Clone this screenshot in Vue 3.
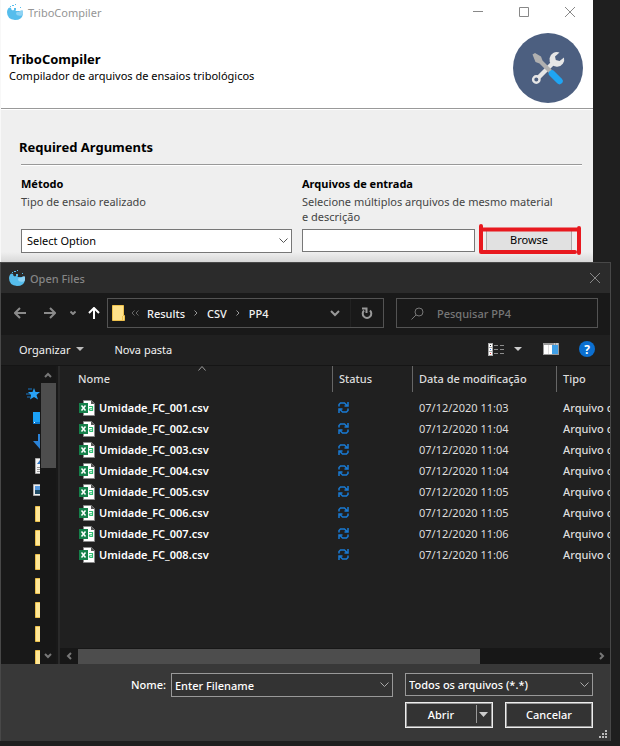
<script setup>
import { ref } from 'vue'

const files = [
  { name: 'Umidade_FC_001.csv', date: '07/12/2020 11:03' },
  { name: 'Umidade_FC_002.csv', date: '07/12/2020 11:04' },
  { name: 'Umidade_FC_003.csv', date: '07/12/2020 11:04' },
  { name: 'Umidade_FC_004.csv', date: '07/12/2020 11:04' },
  { name: 'Umidade_FC_005.csv', date: '07/12/2020 11:05' },
  { name: 'Umidade_FC_006.csv', date: '07/12/2020 11:05' },
  { name: 'Umidade_FC_007.csv', date: '07/12/2020 11:06' },
  { name: 'Umidade_FC_008.csv', date: '07/12/2020 11:06' }
]
const crumbs = ['Results', 'CSV', 'PP4']
const places = ['star', 'desktop', 'download', 'document', 'picture', 'folder', 'folder', 'folder', 'folder', 'folder', 'folder', 'folder']
const inputPath = ref('')
const search = ref('')
</script>

<template>
  <main class="desktop">
    <section class="window">
      <header class="titlebar">
        <svg class="logo" viewBox="0 0 16 16">
          <path d="M1.500 4Q3 3 4 4q0 2 2 2.500Q8 5 9 7h7v3q-1 6-8 6-8-.5-8-8 0-2 1.500-4z" fill="#56bdec" />
          <path d="M10 7.500q1 1 2.500 0 1.500-2 3.500-1 .5 4-1 5-5 1-6-1.500 0-1.500 1-2.500z" fill="#8fd3f4" />
          <path d="M5 1h2v1H5zM8 0h1v1H8zM7 4h2v2H7zM13 3h1v1h-1zM3 2h1v1H3z" fill="#56bdec" />
        </svg>
        <span class="caption">TriboCompiler</span>
        <button class="sys" aria-label="Minimize"><svg viewBox="0 0 10 10"><path d="M0 4.500h10" /></svg></button>
        <button class="sys" aria-label="Maximize"><svg viewBox="0 0 10 10"><path d="M.5.5h9v9h-9z" /></svg></button>
        <button class="sys" aria-label="Close"><svg viewBox="0 0 10 10"><path d="M0 0l10 10M10 0 0 10" /></svg></button>
      </header>

      <div class="banner">
        <div class="intro">
          <h1>TriboCompiler</h1>
          <p>Compilador de arquivos de ensaios tribológicos</p>
        </div>
        <svg class="tools" viewBox="0 0 70 70">
          <circle cx="35" cy="35" r="35" fill="#4c5f80" />
          <path d="M25 45 42 28" stroke="#e6e6e6" stroke-width="4.500" />
          <circle cx="23.300" cy="46.500" r="3.200" fill="none" stroke="#e6e6e6" stroke-width="2.400" />
          <path d="M46.500 19.500a7.400 7.400 0 1 0 4.500 5l-4.500 3.500-3.700-1-.8-3.500z" fill="#e6e6e6" />
          <path d="M19.500 21.500 22 20l6 3.500 1.500 4L39 37l-3 3-9.500-9.500-4-1.500z" fill="#b0b0b0" />
          <path d="M39 40.500 46.500 48" stroke="#1fa5f3" stroke-width="6.500" stroke-linecap="round" />
        </svg>
      </div>

      <form class="form" @submit.prevent>
        <h2>Required Arguments</h2>
        <div class="fields">
          <div class="field">
            <label for="method">Método</label>
            <p>Tipo de ensaio realizado</p>
            <div class="combo light">
              <select id="method"><option>Select Option</option></select>
              <svg viewBox="0 0 9 6"><path d="M.5.5l4 4 4-4" /></svg>
            </div>
          </div>
          <div class="field">
            <label for="entry">Arquivos de entrada</label>
            <p>Selecione múltiplos arquivos de mesmo material e descrição</p>
            <div class="picker">
              <input id="entry" v-model="inputPath" type="text">
              <div class="marked">
                <button type="button" class="browse">Browse</button>
                <svg class="mark" viewBox="0 0 106 34">
                  <path d="M4 3v26M4 6.500h98M102 5v25M4.500 29H98" />
                </svg>
              </div>
            </div>
          </div>
        </div>
      </form>
    </section>

    <section class="dialog">
      <header class="dialog-title">
        <svg class="logo" viewBox="0 0 16 16">
          <path d="M1.500 4Q3 3 4 4q0 2 2 2.500Q8 5 9 7h7v3q-1 6-8 6-8-.5-8-8 0-2 1.500-4z" fill="#56bdec" />
          <path d="M10 7.500q1 1 2.500 0 1.500-2 3.500-1 .5 4-1 5-5 1-6-1.500 0-1.500 1-2.500z" fill="#8fd3f4" />
          <path d="M5 1h2v1H5zM8 0h1v1H8zM7 4h2v2H7zM13 3h1v1h-1zM3 2h1v1H3z" fill="#56bdec" />
        </svg>
        <span class="caption">Open Files</span>
        <button class="sys small" aria-label="Close"><svg viewBox="0 0 10 10"><path d="M0 0l10 10M10 0 0 10" /></svg></button>
      </header>

      <nav class="nav">
        <div class="arrows">
          <button aria-label="Back"><svg width="12" height="12" viewBox="0 0 12 12"><path d="M12 6H1M6 1 1 6l5 5" /></svg></button>
          <button aria-label="Forward"><svg width="12" height="12" viewBox="0 0 12 12"><path d="M0 6h11M6 1l5 5-5 5" /></svg></button>
          <button aria-label="Recent"><svg width="6" height="4" viewBox="0 0 6 4"><path d="M.5.500 3 3 5.500.5" /></svg></button>
          <button aria-label="Up" class="up"><svg width="12" height="12" viewBox="0 0 12 12"><path d="M6 12V1M1 6l5-5 5 5" /></svg></button>
        </div>
        <div class="address">
          <svg width="13" height="16" viewBox="0 0 13 16"><path d="M.5.5h11v10h1v5H.5z" fill="#ffe28a" stroke="#eec14c" /><path d="M10.500 11v4" stroke="#eec14c" /></svg>
          <svg class="more" width="8" height="6" viewBox="0 0 8 6"><path d="M3.500.5 1 3l2.500 2.500M7.500.5 5 3l2.500 2.500" /></svg>
          <template v-for="(c, i) in crumbs" :key="c">
            <a href="#">{{ c }}</a>
            <svg v-if="i < crumbs.length - 1" class="sep" width="4" height="6" viewBox="0 0 4 6"><path d="M.5.500 3 3 .5 5.500" /></svg>
          </template>
          <button class="drop" aria-label="History"><svg width="10" height="7" viewBox="0 0 10 7"><path d="M1 1l4 4 4-4" /></svg></button>
          <button class="refresh" aria-label="Refresh"><svg width="12" height="12" viewBox="0 0 12 12"><path d="M9 3.500A4.300 4.300 0 1 1 3 3.500M1 1.500H5.500V6" /></svg></button>
        </div>
        <div class="search">
          <svg width="13" height="13" viewBox="0 0 13 13"><circle cx="8" cy="5" r="4" /><path d="M5 8 .5 12.500" /></svg>
          <input v-model="search" type="text" placeholder="Pesquisar PP4" aria-label="Pesquisar PP4">
        </div>
      </nav>

      <div class="toolbar">
        <button>Organizar <svg width="8" height="4" viewBox="0 0 8 4"><path d="M0 0h8L4 4z" fill="#bbb" /></svg></button>
        <button class="new">Nova pasta</button>
        <button class="view" aria-label="View">
          <svg width="16" height="13" viewBox="0 0 16 13">
            <path d="M0 0h5v13H0z" fill="#aaa" /><path d="M1 1h3v3H1zM1 5h3v3H1zM1 9h3v3H1z" fill="#fff" />
            <path d="M2 2h1v1H2z" fill="#222" /><path d="M2 6h1v1H2z" fill="#2f7de0" /><path d="M2 10h1v1H2z" fill="#d33" />
            <path d="M6 2.500h4M12 2.500h4M6 6.500h4M12 6.500h4M6 10.500h4M12 10.500h4" stroke="#8d8d8d" />
          </svg>
          <svg width="8" height="4" viewBox="0 0 8 4"><path d="M0 0h8L4 4z" fill="#ccc" /></svg>
        </button>
        <button class="preview" aria-label="Preview pane">
          <svg width="16" height="12" viewBox="0 0 16 12"><path d="M0 0h16v12H0z" fill="#999" /><path d="M1 2h4v9H1zM5 2h4v9H5z" fill="#fff" /><path d="M9 2h6v9H9z" fill="#3f9fe6" /><path d="M5 2h.5v9H5z" fill="#bbb" /><path d="M11 1h1M13 1h2" stroke="#eee" /></svg>
        </button>
        <button class="help" aria-label="Help">?</button>
      </div>

      <div class="panes">
        <aside class="side">
          <ul>
            <li v-for="(p, i) in places" :key="i">
              <svg width="14" height="16" viewBox="0 0 14 16">
                <g v-if="p === 'star'"><path d="M8 2l1.500 4H14l-3.500 3 1.500 4.500-4-2.500-4 2.500L5 9 2 6h4.500z" fill="#28a2f5" /><path d="M2 3h4M0 8h4M1 11h3" stroke="#1976c5" /></g>
                <g v-else-if="p === 'desktop'"><path d="M7 2h7v12H7z" fill="#1ba1f7" /><path d="M7 12h7v2H7z" fill="#0c79cf" /><path d="M8 12h1v1H8z" fill="#fff" /></g>
                <path v-else-if="p === 'download'" d="M12 0v7H7l7 8V0z" fill="#2b83d8" />
                <g v-else-if="p === 'document'"><path d="M9.500.5H15v15H9.500z" fill="#f4f4f4" stroke="#aaa" /><path d="M11 9.500h3M11 11.500h3M11 13.500h3" stroke="#999" /><path d="M11 6h3V2z" fill="#2f77c5" /></g>
                <g v-else-if="p === 'picture'"><path d="M7.500 2.500H15v11H7.500z" fill="#eee" stroke="#aaa" /><path d="M9 4h5v4H9z" fill="#589be0" /><path d="M9 8h5v4H9z" fill="#204c66" /></g>
                <path v-else d="M9.500.5H15v15H9.500z" fill="#ffe796" stroke="#edc04b" />
              </svg>
            </li>
          </ul>
          <div class="vbar">
            <svg width="8" height="6" viewBox="0 0 8 6"><path d="M1 5l3-3 3 3" /></svg>
            <i></i>
            <svg width="8" height="6" viewBox="0 0 8 6"><path d="M1 1l3 3 3-3" /></svg>
          </div>
        </aside>

        <div class="list">
          <table>
            <thead>
              <tr>
                <th class="c-name">Nome<svg class="sort" width="8" height="5" viewBox="0 0 8 5"><path d="M.5 4.500l3.500-4 3.500 4" /></svg></th>
                <th class="c-status">Status</th>
                <th class="c-date">Data de modificação</th>
                <th>Tipo</th>
              </tr>
            </thead>
            <tbody>
              <tr v-for="f in files" :key="f.name">
                <td class="name">
                  <span>
                    <svg width="16" height="16" viewBox="0 0 16 16">
                      <path d="M4.500.5h8l3 3v12h-11z" fill="#fff" stroke="#8a8a8a" />
                      <path d="M12 0v4h4z" fill="#555" />
                      <path d="M0 3h9v10H0z" fill="#15804a" />
                      <path d="M2.500 5.500l4 5M6.500 5.500l-4 5" stroke="#fff" stroke-width="1.500" />
                      <path d="M10 6.500h3.500v4H11q-1-.5-.5-1.500.5-.5 3-.500" fill="none" stroke="#2ebd72" stroke-width="1.200" />
                    </svg>
                    {{ f.name }}
                  </span>
                </td>
                <td class="sync">
                  <svg width="11" height="11" viewBox="0 0 11 11"><path d="M1 4.500V2.500L2.500 1h4l2.500 2.500M10 0v4H6.500M10 6.500v2L8.500 10h-4L2 7.500M1 11V7h3.500" /></svg>
                </td>
                <td>{{ f.date }}</td>
                <td class="type">Arquivo de Valores</td>
              </tr>
            </tbody>
          </table>
          <div class="hbar">
            <svg width="6" height="8" viewBox="0 0 6 8"><path d="M5 1 2 4l3 3" /></svg>
            <div class="track"><i></i></div>
            <svg width="6" height="8" viewBox="0 0 6 8"><path d="M1 1l3 3-3 3" /></svg>
          </div>
        </div>
      </div>

      <footer class="footer">
        <label for="filename">Nome:</label>
        <div class="combo dark">
          <select id="filename"><option>Enter Filename</option></select>
          <svg viewBox="0 0 9 6"><path d="M.5.5l4 4 4-4" /></svg>
        </div>
        <div class="actions">
          <div class="combo dark">
            <select aria-label="Tipo de arquivo"><option>Todos os arquivos (*.*)</option></select>
            <svg viewBox="0 0 9 6"><path d="M.5.5l4 4 4-4" /></svg>
          </div>
          <div class="buttons">
            <button class="open"><span>Abrir</span><svg width="16" height="18" viewBox="0 0 16 18"><path d="M.5 0v18" stroke="#999" /><path d="M3 7h9L7.500 12z" fill="#ccc" /></svg></button>
            <button class="cancel">Cancelar</button>
          </div>
        </div>
        <svg class="grip" width="8" height="8" viewBox="0 0 8 8"><path d="M6 0h2v2H6zM3 3h2v2H3zM6 3h2v2H6zM0 6h2v2H0zM3 6h2v2H3zM6 6h2v2H6z" fill="#bbb" /></svg>
      </footer>
    </section>
  </main>
</template>

<style>
body { background: #1f1f1f; }
</style>

<style scoped>
* { box-sizing: border-box; }
.desktop { font: 500 11px/15px "Noto Sans", "Open Sans", sans-serif; padding-bottom: 5px; }
button, input, select { font: inherit; color: inherit; margin: 0; padding: 0; border: 0; background: none; border-radius: 0; outline: none; }
svg { display: block; flex: none; fill: none; }
h1, h2, p, ul { margin: 0; padding: 0; }

.window { margin-right: 27px; background: #fff; border-left: 1px solid #f8f8f8; color: #000; font-weight: 400; }
.titlebar { display: flex; align-items: center; height: 24px; padding-left: 6px; color: #959595; }
.logo { width: 16px; height: 16px; margin-right: 5px; }
.caption { flex: 1; }
.sys { display: grid; place-items: center; width: 46px; height: 24px; }
.sys svg { width: 10px; height: 10px; stroke: #888; overflow: visible; }
.sys.small { width: 30px; }
.banner { display: flex; justify-content: space-between; height: 85px; padding: 9px 10px 0 8px; border-bottom: 1px solid #999; }
.intro { padding-top: 18px; }
h1 { font-size: 13px; line-height: 17px; font-weight: 700; }
.tools { width: 70px; height: 70px; }
.form { margin-top: 1px; padding: 28px 11px 9px 20px; background: linear-gradient(#efefef calc(100% - 10px), #d8d8d8); }
h2 { margin-left: -2px; padding-bottom: 8px; font-size: 13px; line-height: 18px; font-weight: 700; }
.fields { display: grid; grid-template-columns: 271fr 280fr; gap: 10px; border-top: 1px solid #999; box-shadow: inset 0 1px #fff; padding-top: 11px; }
.field { display: flex; flex-direction: column; }
.field label { font-weight: 700; line-height: 16px; }
.field p { min-height: 30px; margin: 2px 0 5px; padding-right: 22px; color: #444; }
.combo { display: grid; align-items: center; }
.combo select { grid-area: 1 / 1; width: 100%; height: 24px; appearance: none; border: 1px solid #777; padding: 0 20px 2px 5px; }
.combo svg { grid-area: 1 / 1; justify-self: end; width: 9px; height: 6px; margin-right: 4px; stroke: #555; pointer-events: none; }
.light select { background: #fff; }
.picker { display: flex; gap: 11px; }
.picker input { flex: 1; min-width: 0; height: 23px; border: 1px solid #777; background: #fff; }
.marked { position: relative; width: 86px; margin-right: 10px; }
.browse { width: 100%; height: 22px; padding-bottom: 2px; background: #e1e1e1; border: 1px solid #adadad; }
.mark { position: absolute; left: -9px; top: -6px; width: 106px; height: 34px; stroke: #e8191f; stroke-width: 4; stroke-linecap: round; stroke-linejoin: round; pointer-events: none; }

.dialog { margin-right: 9px; background: #202020; border: 1px solid #484848; border-bottom: 0; color: #f2f2f2; }
.dialog-title { display: flex; align-items: center; height: 30px; padding-left: 8px; background: #2b2b2b; color: #858585; }
.nav { display: grid; grid-template-columns: 93px 277fr 202fr; align-items: center; height: 42px; padding: 0 12px 2px 13px; background: #191919; }
.arrows { display: flex; align-items: center; gap: 14px; stroke: #8a8a8a; stroke-width: 2; }
.arrows button { display: grid; }
.arrows button:nth-child(2) { margin-left: 4px; }
.arrows .up { stroke: #fff; margin-left: -2px; }
.address { display: flex; align-items: center; height: 30px; border: 1px solid #535353; padding-left: 4px; }
.address a { color: inherit; text-decoration: none; }
.more { stroke: #666; margin: 0 8px 0 6px; }
.sep { stroke: #999; margin: 0 9px; }
.drop { margin-left: auto; padding: 0 10px; stroke: #999; stroke-width: 2; }
.refresh { display: grid; place-items: center; width: 33px; height: 28px; border-left: 1px solid #222; stroke: #999; stroke-width: 2; }
.search { display: flex; align-items: center; gap: 13px; height: 30px; margin-left: 12px; border: 1px solid #535353; padding-left: 14px; }
.search svg { stroke: #777; }
.search input { flex: 1; min-width: 0; }
.search input::placeholder { color: #777; opacity: 1; }
.nav { grid-template-columns: 93px 277fr 214fr; }
.toolbar { display: flex; align-items: center; height: 30px; padding: 0 15px 2px 18px; font-weight: 400; }
.toolbar button { display: flex; align-items: center; gap: 6px; }
.toolbar .new { margin-left: 30px; }
.toolbar .view { margin-left: auto; gap: 10px; }
.toolbar .preview { margin: 0 20px 0 21px; }
.toolbar .help { justify-content: center; width: 16px; height: 16px; border-radius: 50%; background: #0b6fd0; color: #fff; font-weight: 700; font-size: 12px; }

.panes { display: flex; border-top: 1px solid #151515; height: 299px; }
.side { display: flex; width: 59px; flex: none; background: #191919; border-right: 2px solid #2a2a2a; }
.side ul { width: 39px; overflow: hidden; list-style: none; padding-top: 16px; }
.side li { height: 24px; padding: 4px 0 4px 25px; }
.vbar { display: flex; flex-direction: column; align-items: center; justify-content: space-between; width: 16px; padding: 6px 0 5px; background: #171717; stroke: #777; stroke-width: 2; }
.vbar i { width: 15px; height: 85px; margin: 5px 0 auto; background: #4d4d4d; }
.list { display: flex; flex-direction: column; flex: 1; min-width: 0; overflow: hidden; }
table { width: 100%; table-layout: fixed; border-collapse: separate; border-spacing: 0; }
th, td { padding: 0 0 0 6px; text-align: left; white-space: nowrap; font-weight: 400; color: #ddd; }
th { height: 26px; padding-bottom: 2px; font-weight: 500; }
th + th { border-left: 1px solid #666; }
td { height: 21px; padding-left: 7px; }
.c-name { position: relative; width: 272px; padding-left: 18px; }
.c-status { width: 80px; }
.c-date { width: 144px; }
.sort { position: absolute; left: 138px; top: 0; stroke: #999; }
tbody::before { content: ""; display: block; height: 5px; }
.name { padding-left: 19px; color: #fff; font-weight: 600; }
.name span { display: flex; gap: 4px; align-items: center; }
.sync { padding-left: 6px; }
.sync svg { stroke: #1979d2; stroke-width: 1.500; }
.type { font-weight: 500; }
.hbar { display: flex; align-items: center; gap: 6px; height: 16px; margin-top: auto; padding: 0 5px 0 6px; background: #171717; stroke: #777; stroke-width: 2; }
.track { flex: 1; }
.track i { display: block; width: 78%; height: 15px; background: #4d4d4d; }

.footer { position: relative; display: flex; gap: 12px; padding: 9px 17px 13px 130px; background: #383838; color: #fff; }
.footer label { line-height: 24px; margin-right: -7px; }
.footer .combo { flex: 1; align-self: start; }
.dark select { background: #333; border-color: #999; padding: 0 20px 0 3px; }
.dark svg { stroke: #aaa; }
.actions { width: 188px; }
.actions select { height: 23px; }
.buttons { display: flex; gap: 12px; margin-top: 6px; }
.buttons button { display: flex; align-items: center; justify-content: center; flex: 1; height: 26px; padding-bottom: 2px; background: #333; border: 1px solid #eee; box-shadow: inset 0 0 0 1px #999; }
.open span { flex: 1; text-align: center; }
.grip { position: absolute; right: 3px; bottom: 3px; }
</style>
